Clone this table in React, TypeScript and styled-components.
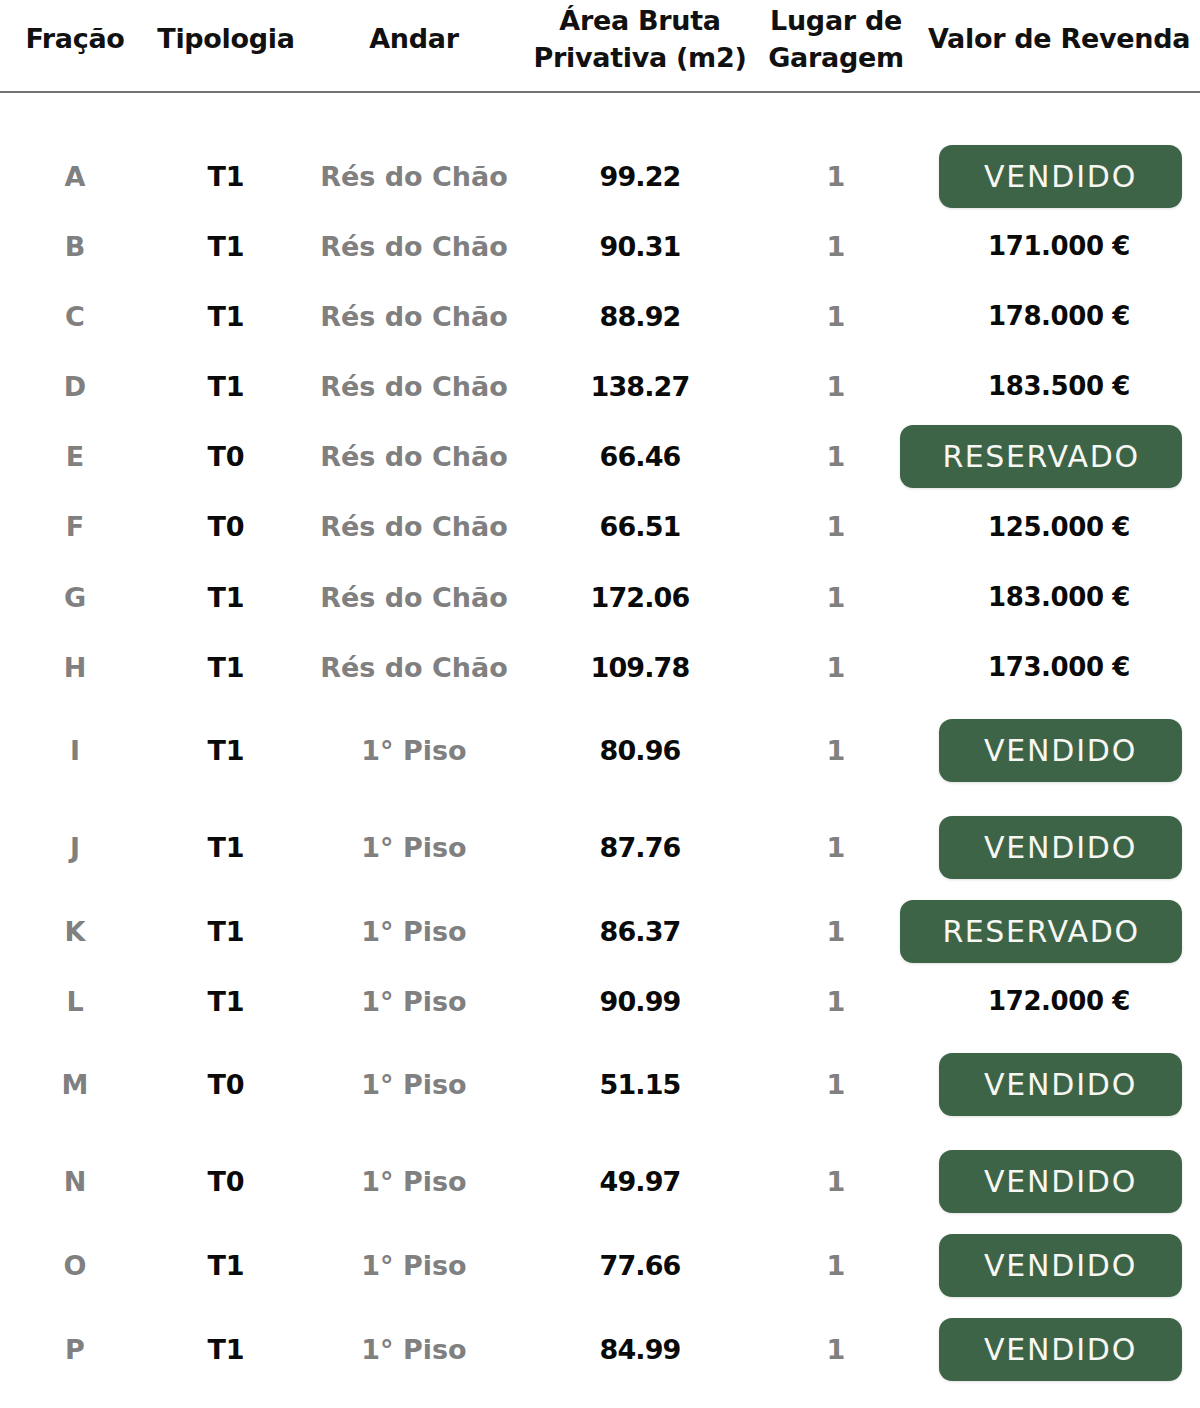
import React from 'react';
import styled, { createGlobalStyle } from 'styled-components';

const GlobalStyle = createGlobalStyle`
  html, body {
    margin: 0;
    padding: 0;
    background: #ffffff;
  }
  body {
    font-family: "DejaVu Sans", "Liberation Sans", sans-serif;
  }
`;

const COLUMNS = '150px 152px 224px 228px 164px 282px';

const Table = styled.div`
  width: 1200px;
  padding-bottom: 10px;
`;

const HeaderRow = styled.div`
  display: grid;
  grid-template-columns: ${COLUMNS};
  height: 77px;
  padding-bottom: 14px;
  border-bottom: 2px solid #737373;
  align-items: center;
`;

const Th = styled.div`
  text-align: center;
  font-size: 27px;
  line-height: 37px;
  font-weight: 700;
  letter-spacing: -0.3px;
  color: #111111;
  white-space: nowrap;
`;

const Body = styled.div`
  padding-top: 48px;
`;

const Row = styled.div<{ $height: number }>`
  display: grid;
  grid-template-columns: ${COLUMNS};
  height: ${p => p.$height}px;
  align-items: center;
`;

const Td = styled.div<{ $muted?: boolean; $num?: boolean }>`
  text-align: center;
  font-size: 27px;
  font-weight: 700;
  letter-spacing: ${p => (p.$num ? '-0.9px' : '0')};
  color: ${p => (p.$muted ? '#808080' : '#0a0a0a')};
  white-space: nowrap;
`;

const ValueCell = styled.div<{ $badge?: boolean }>`
  display: flex;
  justify-content: ${p => (p.$badge ? 'flex-end' : 'center')};
  padding-right: ${p => (p.$badge ? '18px' : '0')};
`;

const Price = styled.span`
  font-size: 26px;
  font-weight: 700;
  letter-spacing: -0.4px;
  color: #0a0a0a;
`;

const Badge = styled.span<{ $wide?: boolean }>`
  display: inline-flex;
  flex-shrink: 0;
  align-items: center;
  justify-content: center;
  box-sizing: border-box;
  width: ${p => (p.$wide ? '282px' : '243px')};
  height: 63px;
  border-radius: 13px;
  background: #3e6448;
  color: #f6f7f2;
  font-size: 30px;
  font-weight: 400;
  letter-spacing: ${p => (p.$wide ? '1.6px' : '1.8px')};
  box-shadow: 0 1px 3px rgba(0, 0, 0, 0.12);
`;

type Unit = {
  fracao: string;
  tipo: string;
  andar: string;
  area: string;
  valor: string;
  height: number;
};

const units: Unit[] = [
  { fracao: 'A', tipo: 'T1', andar: 'Rés do Chão', area: '99.22', valor: 'VENDIDO', height: 70 },
  { fracao: 'B', tipo: 'T1', andar: 'Rés do Chão', area: '90.31', valor: '171.000 €', height: 70 },
  { fracao: 'C', tipo: 'T1', andar: 'Rés do Chão', area: '88.92', valor: '178.000 €', height: 70 },
  { fracao: 'D', tipo: 'T1', andar: 'Rés do Chão', area: '138.27', valor: '183.500 €', height: 70 },
  { fracao: 'E', tipo: 'T0', andar: 'Rés do Chão', area: '66.46', valor: 'RESERVADO', height: 70 },
  { fracao: 'F', tipo: 'T0', andar: 'Rés do Chão', area: '66.51', valor: '125.000 €', height: 71 },
  { fracao: 'G', tipo: 'T1', andar: 'Rés do Chão', area: '172.06', valor: '183.000 €', height: 70 },
  { fracao: 'H', tipo: 'T1', andar: 'Rés do Chão', area: '109.78', valor: '173.000 €', height: 70 },
  { fracao: 'I', tipo: 'T1', andar: '1° Piso', area: '80.96', valor: 'VENDIDO', height: 96 },
  { fracao: 'J', tipo: 'T1', andar: '1° Piso', area: '87.76', valor: 'VENDIDO', height: 98 },
  { fracao: 'K', tipo: 'T1', andar: '1° Piso', area: '86.37', valor: 'RESERVADO', height: 70 },
  { fracao: 'L', tipo: 'T1', andar: '1° Piso', area: '90.99', valor: '172.000 €', height: 70 },
  { fracao: 'M', tipo: 'T0', andar: '1° Piso', area: '51.15', valor: 'VENDIDO', height: 96 },
  { fracao: 'N', tipo: 'T0', andar: '1° Piso', area: '49.97', valor: 'VENDIDO', height: 98 },
  { fracao: 'O', tipo: 'T1', andar: '1° Piso', area: '77.66', valor: 'VENDIDO', height: 70 },
  { fracao: 'P', tipo: 'T1', andar: '1° Piso', area: '84.99', valor: 'VENDIDO', height: 98 },
];

const isStatus = (v: string) => v === 'VENDIDO' || v === 'RESERVADO';

const App: React.FC = () => (
  <>
    <GlobalStyle />
    <Table>
      <HeaderRow>
        <Th>Fração</Th>
        <Th>Tipologia</Th>
        <Th>Andar</Th>
        <Th>
          Área Bruta
          <br />
          Privativa (m2)
        </Th>
        <Th>
          Lugar de
          <br />
          Garagem
        </Th>
        <Th>Valor de Revenda</Th>
      </HeaderRow>
      <Body>
        {units.map(u => (
          <Row key={u.fracao} $height={u.height}>
            <Td $muted>{u.fracao}</Td>
            <Td>{u.tipo}</Td>
            <Td $muted>{u.andar}</Td>
            <Td $num>{u.area}</Td>
            <Td $muted>1</Td>
            <ValueCell $badge={isStatus(u.valor)}>
              {isStatus(u.valor) ? (
                <Badge $wide={u.valor === 'RESERVADO'}>{u.valor}</Badge>
              ) : (
                <Price>{u.valor}</Price>
              )}
            </ValueCell>
          </Row>
        ))}
      </Body>
    </Table>
  </>
);

export default App;
